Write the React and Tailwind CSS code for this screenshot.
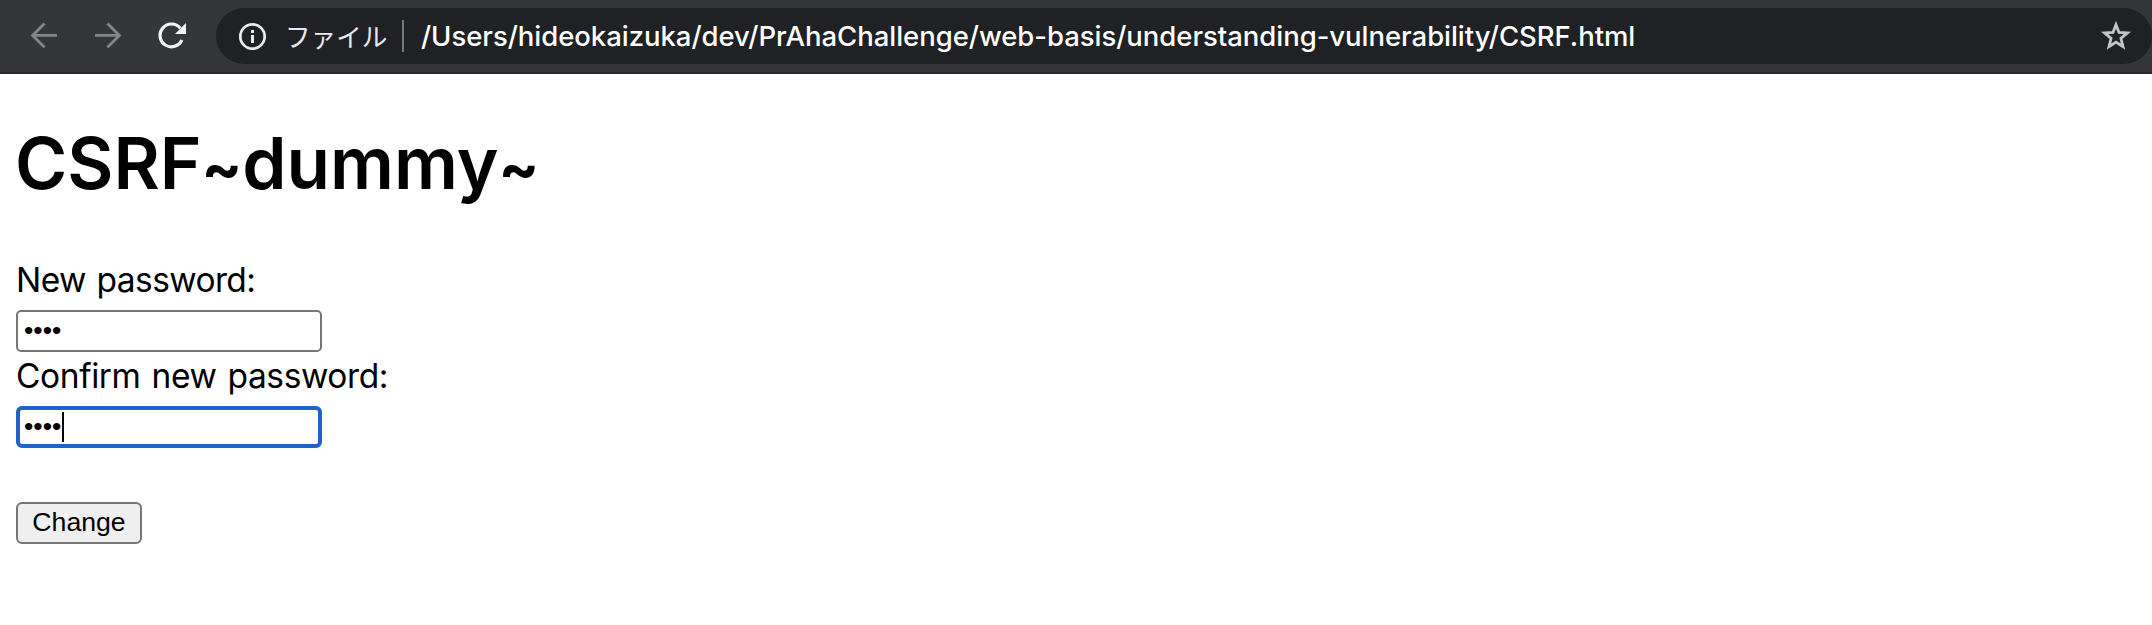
function Toolbar() {
  return (
    <header className="flex h-[74px] items-start border-b-2 border-[#28292c] bg-[#35363a] pt-2">
      <nav className="flex h-14 w-[216px] shrink-0 items-center">
        <svg className="ml-[30px] h-7 w-7 shrink-0" viewBox="0 0 28 28" fill="none" stroke="#85868a" strokeWidth="2.8">
          <path d="M27 13.4H3M14.5 1.5L2.6 13.4L14.5 25.3" />
        </svg>
        <svg className="ml-9 h-7 w-7 shrink-0" viewBox="0 0 28 28" fill="none" stroke="#85868a" strokeWidth="2.8">
          <path d="M1 13.4H25M13.5 1.5L25.4 13.4L13.5 25.3" />
        </svg>
        <svg className="ml-9 h-7 w-7 shrink-0" viewBox="0 0 28 28" fill="none">
          <path d="M23.9 18A11.4 11.4 0 1 1 22.3 6.2" stroke="#f1f3f4" strokeWidth="3.2" />
          <path d="M28 1V12H17Z" fill="#f1f3f4" />
        </svg>
      </nav>
      <div className="flex h-14 flex-1 items-center rounded-full bg-[#202124] text-white">
        <svg className="ml-[22px] h-7 w-7 shrink-0" viewBox="0 0 28 28" fill="none">
          <circle cx="14.5" cy="14.5" r="12.2" stroke="#e8eaed" strokeWidth="2.8" />
          <path d="M13 8h3v3h-3zM13 13h3v8h-3z" fill="#e8eaed" />
        </svg>
        <span className="ml-[19px] w-[119px] shrink-0 whitespace-nowrap border-r-2 border-[#77787b] font-['Noto_Sans_CJK_JP',sans-serif] text-[25.6px] leading-8 text-[#e8eaed]">
          ファイル
        </span>
        <span className="ml-[17px] whitespace-nowrap font-['Inter',sans-serif] text-[27.5px] font-medium leading-8 tracking-[-0.04px]">
          /Users/hideokaizuka/dev/PrAhaChallenge/web-basis/understanding-vulnerability/CSRF.html
        </span>
        <svg className="ml-auto mr-5 h-8 w-8 shrink-0" viewBox="0 0 32 32" fill="none" stroke="#c4c5c7" strokeWidth="2.8">
          <path d="M16 4.7L19 12.5L27.4 13L20.9 18.3L23 26.7L16 22.1L9 26.7L11.1 18.3L4.6 13L13 12.5Z" />
        </svg>
      </div>
    </header>
  );
}

export default function App() {
  return (
    <div className="h-[625px] w-full overflow-hidden bg-white text-black">
      <Toolbar />
      <main className="flex flex-col items-start px-4">
        <h1 className="-ml-px mt-[41px] h-24 whitespace-nowrap font-['Inter',sans-serif] text-[71px] font-semibold leading-[96px]">
          CSRF<span className="text-[60px] font-bold">~</span>dummy<span className="text-[60px] font-bold">~</span>
        </h1>
        <label className="mt-[45px] whitespace-nowrap font-['Inter',sans-serif] text-[33.5px] leading-[48px] tracking-[-0.6px] [word-spacing:2px]">
          New password:
        </label>
        <div className="mt-1.5 flex h-[42px] w-[306px] items-center rounded-[5px] border-2 border-[#767676] pl-1.5 pb-0.5 font-['Liberation_Sans',sans-serif] text-[26.67px] leading-[30px]">
          ••••
        </div>
        <label className="whitespace-nowrap font-['Inter',sans-serif] text-[33.5px] leading-[48px] tracking-[-0.4px] [word-spacing:2px]">
          Confirm new password:
        </label>
        <div className="mt-1.5 flex h-[42px] w-[306px] items-center rounded-[6px] border-4 border-[#2062c9] pl-1 font-['Liberation_Sans',sans-serif] text-[26.67px] leading-[30px]">
          <span className="-mt-0.5">••••</span>
          <span className="ml-px h-[30px] w-0.5 bg-black" />
        </div>
        <button className="mt-[54px] h-[42px] w-[126px] rounded-[6px] border-2 border-[#767676] bg-[#efefef] pb-0.5 font-['Liberation_Sans',sans-serif] text-[26.67px] leading-[30px]">
          Change
        </button>
      </main>
    </div>
  );
}
